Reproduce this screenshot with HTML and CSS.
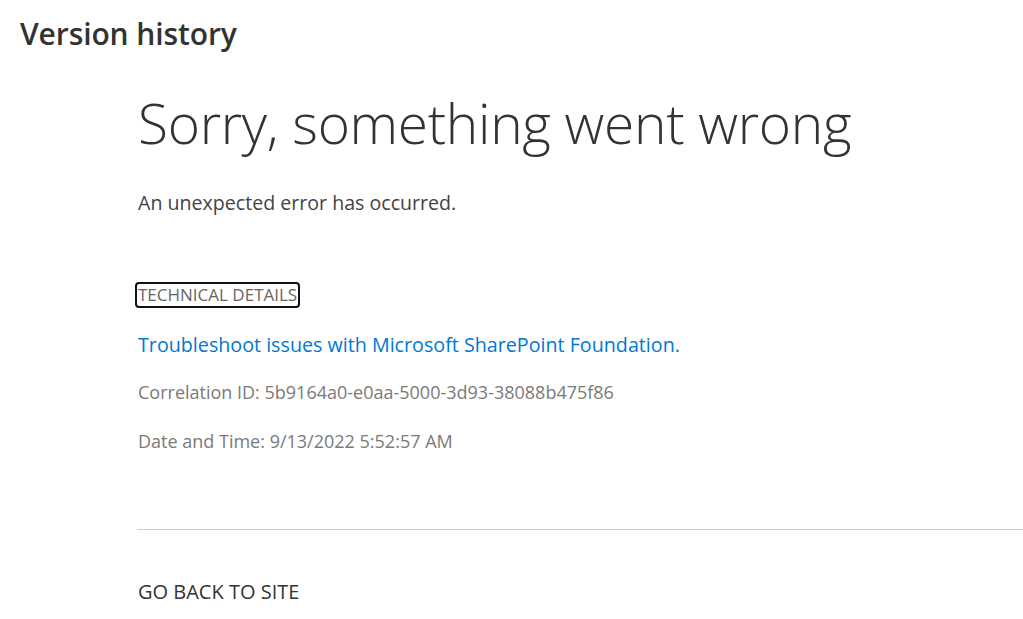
FILE: index.html
```html
<!DOCTYPE html>
<html lang="en">
<head>
  <meta charset="UTF-8" />
  <title>Version history</title>
  <link rel="stylesheet" href="styles.css">
</head>
<body>
  <header class="page-title">Version history</header>
  <main class="error-page">
    <h1 class="error-title">Sorry, something went wrong</h1>
    <p class="error-message">An unexpected error has occurred.</p>
    <button class="details-toggle" type="button">TECHNICAL DETAILS</button>
    <a class="help-link" href="#">Troubleshoot issues with Microsoft SharePoint Foundation.</a>
    <p class="meta">Correlation ID: 5b9164a0-e0aa-5000-3d93-38088b475f86</p>
    <p class="meta">Date and Time: 9/13/2022 5:52:57 AM</p>
    <hr class="divider">
    <a class="back-link" href="#">GO BACK TO SITE</a>
  </main>
</body>
</html>
```

FILE: styles.css
```css
* {
  box-sizing: border-box;
}

body {
  margin: 0;
  font-family: 'Open Sans', 'Noto Sans', sans-serif;
  background: #fff;
  color: #333;
  overflow: hidden;
}

.page-title {
  padding: 14px 0 0 20px;
  font-size: 30px;
  font-weight: 600;
  color: #333;
  line-height: 40px;
  letter-spacing: -0.1px;
}

.error-page {
  display: flex;
  flex-direction: column;
  align-items: flex-start;
  padding-left: 137px;
}

.error-title {
  margin: 29px 0 0 1px;
  font-size: 55px;
  font-weight: 300;
  line-height: 80px;
  letter-spacing: -0.3px;
  color: #333;
}

.error-message {
  margin: 27px 0 0 1px;
  font-size: 19.6px;
  line-height: 26px;
  color: #444;
}

.details-toggle {
  margin: 66px 0 0 -2px;
  padding: 1px 1px;
  font-family: inherit;
  font-size: 17px;
  line-height: 20px;
  color: #666;
  background: none;
  border: 2px solid #111;
  border-radius: 4px;
}

.help-link {
  margin: 24px 0 0 1px;
  font-size: 19.7px;
  line-height: 26px;
  color: #0078d4;
  text-decoration: none;
}

.meta {
  margin: 21px 0 0 1px;
  font-size: 18px;
  line-height: 26px;
  color: #7a7a7a;
}

.meta + .meta {
  margin-top: 23px;
}

.divider {
  align-self: stretch;
  margin: 75px 0 0 0;
  border: none;
  border-top: 1px solid #ccc;
}

.back-link {
  margin: 49px 0 0 1px;
  font-size: 20px;
  line-height: 26px;
  color: #333;
  text-decoration: none;
}
```
